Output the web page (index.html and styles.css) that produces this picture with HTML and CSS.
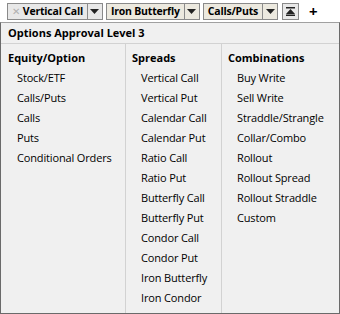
FILE: index.html
```html
<!DOCTYPE html>
<html>
<head>
<meta charset="utf-8">
<link rel="stylesheet" href="styles.css">
</head>
<body>
<div class="tabbar">
  <div class="tab">
    <span class="label"><span class="x">✕</span>Vertical Call</span>
    <span class="drop"><svg width="9" height="5" viewBox="0 0 9 5"><path d="M0 0H9L4.5 5Z" fill="#222"/></svg></span>
  </div>
  <div class="tab alt">
    <span class="label">Iron Butterfly</span>
    <span class="drop"><svg width="9" height="5" viewBox="0 0 9 5"><path d="M0 0H9L4.5 5Z" fill="#222"/></svg></span>
  </div>
  <div class="tab alt">
    <span class="label">Calls/Puts</span>
    <span class="drop"><svg width="9" height="5" viewBox="0 0 9 5"><path d="M0 0H9L4.5 5Z" fill="#222"/></svg></span>
  </div>
  <div class="btn">
    <svg width="9" height="9" viewBox="0 0 9 9"><path d="M0 0H9V1.5H0Z M4.5 2L9 7H0Z M0 7.5H9V9H0Z" fill="#222"/></svg>
  </div>
  <div class="plus">+</div>
</div>
<div class="panel">
  <div class="title">Options Approval Level 3</div>
  <div class="cols">
    <div class="col">
      <div class="head">Equity/Option</div>
      <div class="item">Stock/ETF</div>
      <div class="item">Calls/Puts</div>
      <div class="item">Calls</div>
      <div class="item">Puts</div>
      <div class="item">Conditional Orders</div>
    </div>
    <div class="col mid">
      <div class="head">Spreads</div>
      <div class="item">Vertical Call</div>
      <div class="item">Vertical Put</div>
      <div class="item">Calendar Call</div>
      <div class="item">Calendar Put</div>
      <div class="item">Ratio Call</div>
      <div class="item">Ratio Put</div>
      <div class="item">Butterfly Call</div>
      <div class="item">Butterfly Put</div>
      <div class="item">Condor Call</div>
      <div class="item">Condor Put</div>
      <div class="item">Iron Butterfly</div>
      <div class="item">Iron Condor</div>
    </div>
    <div class="col">
      <div class="head">Combinations</div>
      <div class="item">Buy Write</div>
      <div class="item">Sell Write</div>
      <div class="item">Straddle/Strangle</div>
      <div class="item">Collar/Combo</div>
      <div class="item">Rollout</div>
      <div class="item">Rollout Spread</div>
      <div class="item">Rollout Straddle</div>
      <div class="item">Custom</div>
    </div>
  </div>
</div>
</body>
</html>
```
FILE: styles.css
```css
* { box-sizing: border-box; }
html, body { margin: 0; padding: 0; }
body {
  width: 340px;
  height: 314px;
  background: #ffffff;
  font-family: "Open Sans", "Noto Sans", sans-serif;
  font-size: 11px;
  color: #000;
  overflow: hidden;
}
.tabbar {
  height: 22px;
  display: flex;
  align-items: center;
  padding: 1px 0 0 7px;
  gap: 3px;
}
.tab {
  display: flex;
  height: 17px;
  border: 1px solid #8a8a8a;
  background: #e8e8e8;
}
.tab.alt { background: #ece9df; }
.label {
  font-weight: bold;
  font-size: 10.5px;
  letter-spacing: -0.2px;
  padding: 0 4px 0 4px;
  line-height: 15px;
  display: flex;
  align-items: center;
}
.x {
  color: #b0b0b0;
  font-weight: normal;
  font-size: 10px;
  margin-right: 3px;
}
.drop {
  width: 15px;
  border-left: 1px solid #8a8a8a;
  display: flex;
  align-items: center;
  justify-content: center;
}
.btn {
  margin-left: 1px;
  width: 17px;
  height: 17px;
  border: 1px solid #8a8a8a;
  background: #e8e8e8;
  display: flex;
  align-items: center;
  justify-content: center;
}
.plus {
  font-weight: bold;
  font-size: 15px;
  line-height: 15px;
  margin-left: 7px;
}
.panel {
  height: 292px;
  border: 1px solid #6a6a6a;
  border-top-color: #a0a0a0;
  background: #f0f0f0;
  display: flex;
  flex-direction: column;
}
.title {
  height: 21px;
  line-height: 20px;
  font-weight: bold;
  padding-left: 7px;
  border-bottom: 1px solid #d2d2d2;
}
.cols {
  flex: 1;
  display: grid;
  grid-template-columns: 124px 97px 1fr;
}
.col { padding-top: 4px; }
.mid {
  border-left: 1px solid #d2d2d2;
  border-right: 1px solid #d2d2d2;
  padding-left: 6px;
}
.col:first-child { padding-left: 7px; }
.col:last-child { padding-left: 6px; }
.head {
  font-weight: bold;
  height: 20px;
  line-height: 20px;
}
.item {
  height: 20px;
  line-height: 20px;
  padding-left: 9px;
  letter-spacing: -0.15px;
}
```
